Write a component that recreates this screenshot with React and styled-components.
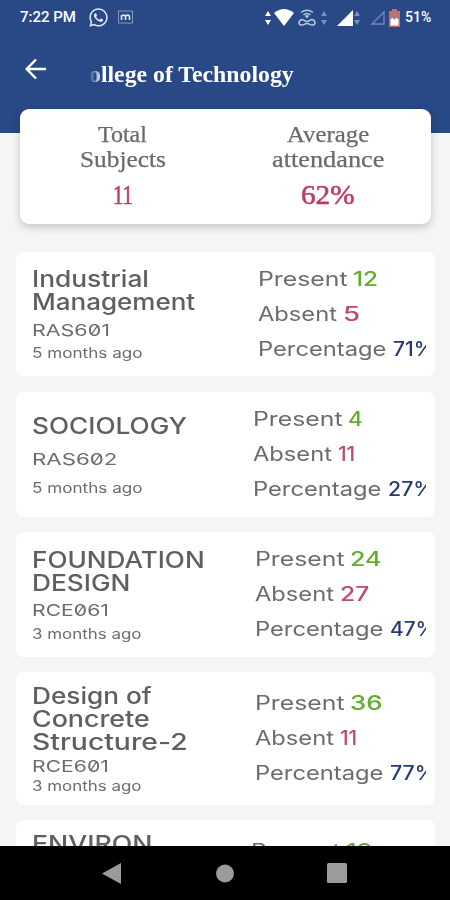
import React, { useLayoutEffect, useRef, useState } from "react";
import styled, { createGlobalStyle } from "styled-components";
import { FaWhatsapp } from "react-icons/fa";

const GlobalStyle = createGlobalStyle`
  * { box-sizing: border-box; }
  body { margin: 0; background: #f5f5f5; }
`;

const Screen = styled.div`
  display: flex;
  flex-direction: column;
  width: 450px;
  height: 900px;
  overflow: hidden;
  background: #f5f5f5;
  font-family: Inter, "Noto Sans", sans-serif;
`;

const Header = styled.header`
  flex: none;
  height: 133px;
  background: #284886;
  color: #fff;
`;

const StatusBar = styled.div`
  display: flex;
  align-items: center;
  height: 35px;
  padding-left: 20px;
  font: 500 15px/35px Roboto, sans-serif;
`;

const StatusIcon = styled.svg`
  flex: none;
  display: block;
  margin-left: ${(p) => p.$gap}px;
`;

const ChatIcon = styled(FaWhatsapp)`
  margin-left: 12px;
  font-size: 21px;
  color: #dce6f5;
`;

const Spacer = styled.span`
  flex: 1;
`;

const StatusPercent = styled.span`
  width: 50px;
  padding-left: 5px;
  font-size: 14px;
`;

const TitleBar = styled.div`
  display: flex;
  align-items: center;
  height: 68px;
  padding-left: 25px;
`;

const Marquee = styled.h1`
  display: flex;
  justify-content: flex-end;
  width: 205px;
  height: 34px;
  margin: 10px 0 0 42px;
  overflow: hidden;
  font: 700 24px/34px "Liberation Serif", serif;
  mask-image: linear-gradient(to right, transparent, #000 13px);
`;

const Summary = styled.section`
  flex: none;
  display: grid;
  grid-template-columns: 1fr 1fr;
  z-index: 1;
  width: 411px;
  height: 115px;
  margin: -24.5px 0 0 20px;
  padding-top: 13px;
  border-radius: 9px;
  background: #fff;
  box-shadow: 0 3px 8px rgba(0, 0, 0, 0.2);
`;

const SummaryItem = styled.div`
  display: flex;
  flex-direction: column;
  align-items: center;
  font: 400 23px/25.5px "Liberation Serif", serif;
  color: #6a6a6a;
  -webkit-text-stroke: 0.25px #6a6a6a;
`;

const SummaryValue = styled.strong`
  margin-top: 6px;
  font: 400 27px/32px "Liberation Serif", serif;
  color: #c23a62;
  -webkit-text-stroke: 0.6px #c23a62;
`;

const SubjectList = styled.main`
  flex: 1;
  display: flex;
  flex-direction: column;
  gap: 15.5px;
  min-height: 0;
  padding: 28px 15px 0 16px;
  overflow: hidden;
`;

const SubjectCard = styled.article`
  flex: none;
  display: flex;
  height: ${(p) => p.$height}px;
  padding: 0 9px 0 16px;
  border-radius: 8px;
  background: #fff;
`;

const SubjectInfo = styled.div`
  flex: none;
  display: flex;
  flex-direction: column;
  width: ${(p) => p.$width}px;
  padding-top: ${(p) => p.$top}px;
`;

const SubjectTitle = styled.h2`
  display: flex;
  flex-direction: column;
  margin: 0;
  font-size: 22.5px;
  font-weight: 500;
  line-height: 23px;
  color: #5f5f5f;
`;

const SubjectCode = styled.div`
  height: 20px;
  margin-top: ${(p) => p.$gap}px;
  font-size: 16.5px;
  line-height: 20px;
  font-variant-numeric: slashed-zero;
  color: #6c6c6c;
`;

const SubjectTime = styled.div`
  height: 18px;
  margin-top: ${(p) => p.$gap}px;
  font-size: 14px;
  line-height: 18px;
  color: #6c6c6c;
`;

const Stats = styled.div`
  flex: 1;
  min-width: 0;
  align-self: center;
  padding-top: 1px;
  overflow: hidden;
`;

const Stat = styled.div`
  display: flex;
  gap: 6px;
  height: 35px;
  font-size: 19.5px;
  line-height: 35px;
  color: #6c6c6c;
`;

const StatValue = styled.span`
  font-weight: 500;
  color: ${(p) => p.$color};
`;

const NavBar = styled.nav`
  flex: none;
  display: flex;
  align-items: center;
  gap: 93px;
  height: 54px;
  padding: 0 0 0 102px;
  background: #000;
`;

const FitBox = styled.span`
  flex: none;
  display: block;
  width: ${(p) => p.$width}px;
  white-space: nowrap;
`;

const FitText = styled.span`
  display: inline-block;
  vertical-align: top;
  transform-origin: left center;
`;

/* Stretches a single line of text horizontally to a given width. */
function Fit({ width, children }) {
  const ref = useRef(null);
  const [scale, setScale] = useState(1);
  useLayoutEffect(() => {
    setScale(width / ref.current.offsetWidth);
  }, [width, children]);
  return (
    <FitBox $width={width}>
      <FitText ref={ref} style={{ transform: `scaleX(${scale})` }}>{children}</FitText>
    </FitBox>
  );
}

const GREEN = "#61ad2d";
const RED = "#c04a6b";
const NAVY = "#27396f";

const subjects = [
  {
    height: 124.5, top: 15.5, gaps: [6.5, 4.5], infoWidth: 225.5,
    title: [["Industrial", 117], ["Management", 163]],
    code: ["RAS601", 78], time: "5 months ago",
    present: ["12", 25], absent: ["5", 17], percent: ["71%", 42],
  },
  {
    height: 125, top: 22, gaps: [12, 10], infoWidth: 220.5,
    title: [["SOCIOLOGY", 155]],
    code: ["RAS602", 85], time: "5 months ago",
    present: ["4", 15], absent: ["11", 17], percent: ["27%", 47],
  },
  {
    height: 124.5, top: 15.5, gaps: [6.5, 4.5], infoWidth: 222.5,
    title: [["FOUNDATION", 173], ["DESIGN", 98]],
    code: ["RCE061", 77], time: "3 months ago",
    present: ["24", 32], absent: ["27", 29], percent: ["47%", 46],
  },
  {
    height: 132.5, top: 12, gaps: [3, 0.5], infoWidth: 222.5,
    title: [["Design of", 120], ["Concrete", 118], ["Structure-2", 156]],
    code: ["RCE601", 77], time: "3 months ago",
    present: ["36", 33], absent: ["11", 17], percent: ["77%", 46],
  },
  {
    height: 132.5, top: 12, gaps: [6.5, 4.5], infoWidth: 219,
    title: [["ENVIRON", 121], ["ENGG", 80]],
    code: ["RCE602", 78], time: "3 months ago",
    present: ["13", 26], absent: ["11", 17], percent: ["54%", 46],
  },
];

function Arrows({ gap, opacity = 1 }) {
  return (
    <StatusIcon $gap={gap} width="6" height="14" viewBox="0 0 6 14" fill="#fff" opacity={opacity}>
      <path d="M3 0 6 5H0zM3 14 0 9h6z" />
    </StatusIcon>
  );
}

function Subject({ data }) {
  return (
    <SubjectCard $height={data.height}>
      <SubjectInfo $width={data.infoWidth} $top={data.top}>
        <SubjectTitle>
          {data.title.map(([line, width]) => <Fit key={line} width={width}>{line}</Fit>)}
        </SubjectTitle>
        <SubjectCode $gap={data.gaps[0]}><Fit width={data.code[1]}>{data.code[0]}</Fit></SubjectCode>
        <SubjectTime $gap={data.gaps[1]}><Fit width={110}>{data.time}</Fit></SubjectTime>
      </SubjectInfo>
      <Stats>
        <Stat>
          <Fit width={89}>Present</Fit>
          <StatValue $color={GREEN}><Fit width={data.present[1]}>{data.present[0]}</Fit></StatValue>
        </Stat>
        <Stat>
          <Fit width={79}>Absent</Fit>
          <StatValue $color={RED}><Fit width={data.absent[1]}>{data.absent[0]}</Fit></StatValue>
        </Stat>
        <Stat>
          <Fit width={129}>Percentage</Fit>
          <StatValue $color={NAVY}><Fit width={data.percent[1]}>{data.percent[0]}</Fit></StatValue>
        </Stat>
      </Stats>
    </SubjectCard>
  );
}

export default function App() {
  return (
    <Screen>
      <GlobalStyle />
      <Header>
        <StatusBar>
          <Fit width={56}>7:22 PM</Fit>
          <ChatIcon />
          <StatusIcon $gap={9} width="15" height="15" viewBox="0 0 15 15" fill="none" stroke="#dce6f5">
            <path d="M.5 1h14v12h-3l-1 1-1-1h-9z" strokeWidth=".8" opacity=".65" />
            <path d="M3.5 10V5M3.5 6.5Q5.5 4 7.5 6V10M7.5 6.5Q9.5 4 11.5 6V10" strokeWidth="1.6" />
          </StatusIcon>
          <Spacer />
          <Arrows gap={0} />
          <StatusIcon $gap={3} width="20" height="17" viewBox="0 0 20 17" fill="#fff">
            <path d="M0 4Q10-4 20 4L10 17z" />
          </StatusIcon>
          <StatusIcon $gap={4} width="18" height="18" viewBox="0 0 18 18" fill="none" stroke="#b5c6e6" strokeWidth="1.5">
            <path d="M3 3.5Q9-1 15 3.5M5.5 6Q9 3 12.5 6" />
            <path d="m7 7 2-1.5L11 7 9 9.5z" fill="#b5c6e6" stroke="none" />
            <path d="M4 10.5c-4 1-4 5.5 0 5.5 2 0 2.500-1.500 5-1.500s3 1.500 5 1.500c4 0 4-4.500 0-5.500-2 0-2.500 2-5 2s-3-2-5-2z" />
          </StatusIcon>
          <Arrows gap={5} opacity={0.4} />
          <StatusIcon $gap={10} width="16" height="16" viewBox="0 0 16 16" fill="#fff">
            <path d="M16 0v16H0z" />
          </StatusIcon>
          <Arrows gap={1} opacity={0.4} />
          <StatusIcon $gap={10} width="15" height="15" viewBox="0 0 15 15" fill="none" stroke="#7289b8" strokeWidth="1.4">
            <path d="M14 2v12H2z" />
          </StatusIcon>
          <StatusIcon $gap={4} width="11" height="18" viewBox="0 0 11 18">
            <path d="M3 0h5v2h3v16H0V2h3z" fill="#cf6a69" />
            <path d="M2 4h7v5H2z" fill="#8d8193" />
            <path d="M1.500 10 4 9l1.500 2L7 9l2.500 1v6.500h-8z" fill="#fff" />
          </StatusIcon>
          <StatusPercent><Fit width={26}>51%</Fit></StatusPercent>
        </StatusBar>
        <TitleBar>
          <svg width="22" height="22" viewBox="0 0 22 22" fill="none" stroke="#fff" strokeWidth="2.5">
            <path d="M21 11H2M11 1.500 1.700 11l9.300 9.500" />
          </svg>
          <Marquee><Fit width={205}>ollege of Technology</Fit></Marquee>
        </TitleBar>
      </Header>
      <Summary>
        <SummaryItem>
          <Fit width={49}>Total</Fit>
          <Fit width={86}>Subjects</Fit>
          <SummaryValue><Fit width={20}>11</Fit></SummaryValue>
        </SummaryItem>
        <SummaryItem>
          <Fit width={82}>Average</Fit>
          <Fit width={112}>attendance</Fit>
          <SummaryValue><Fit width={54}>62%</Fit></SummaryValue>
        </SummaryItem>
      </Summary>
      <SubjectList>
        {subjects.map((s) => <Subject key={s.title[0][0]} data={s} />)}
      </SubjectList>
      <NavBar>
        <svg width="19" height="21" viewBox="0 0 19 21" fill="#9b9b9b"><path d="M19 0v21L0 10.500z" /></svg>
        <svg width="20" height="19" viewBox="0 0 20 19" fill="#9b9b9b"><circle cx="11" cy="9.500" r="9" /></svg>
        <svg width="20" height="20" viewBox="0 0 20 20" fill="#9b9b9b"><rect width="20" height="20" rx="1.500" /></svg>
      </NavBar>
    </Screen>
  );
}
